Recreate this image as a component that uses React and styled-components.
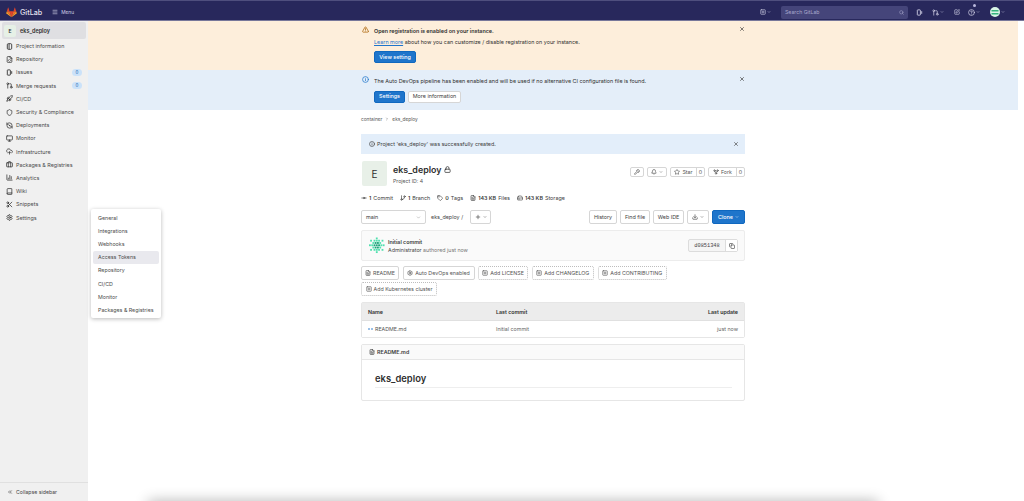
import React from 'react';
import styled, { createGlobalStyle } from 'styled-components';
import {
  AlertTriangle, Info, X, ChevronDown, ChevronRight, Search, Lock, Wrench, Bell, Star, GitFork, Download,
  Copy, FileText, Settings, PlusSquare, GitCommitHorizontal, GitBranch, GitPullRequest, Tag, HardDrive, Plus, Menu,
  SquarePen, HelpCircle, Rocket, Shield, Monitor, CloudUpload, Briefcase, ChartColumn, Book, Scissors,
  ChevronsLeft, FileCode, RefreshCcwDot,
} from 'lucide-react';

const GlobalStyle = createGlobalStyle`
  html, body {
    margin: 0;
    height: 100%;
    overflow: hidden;
    background: #fff;
  }
  body {
    font-family: Inter, "Liberation Sans", sans-serif;
    font-size: 6px;
    color: #303030;
  }
  * { box-sizing: border-box; }
  svg.lucide { stroke-width: 2.5; }
`;

const Page = styled.div`
  position: relative;
  width: 1024px;
  height: 501px;
  overflow: hidden;
`;

const Navbar = styled.header`
  position: relative;
  height: 21px;
  background: #28285c;
  display: flex;
  align-items: center;
  padding: 4px 0 0 6px;
  color: #d1d0e6;
  border-bottom: 1px solid #77779a;

  /* edges of the browser tabs above the page */
  &::before {
    content: '';
    position: absolute;
    left: 0;
    right: 0;
    top: 0;
    height: 1px;
    background: repeating-linear-gradient(90deg, #4f4f7e 0 88px, #28285c 88px 92px, #4f4f7e 92px 84.3px);
    background-size: 84.3px 1px;
    background-position: 4px 0;
  }
`;

const Brand = styled.span`
  font-size: 7.2px;
  font-weight: 500;
  margin-left: 3px;
  color: #e4e3f0;
`;

const MenuLabel = styled.span`
  display: flex;
  align-items: center;
  gap: 3px;
  margin-left: 10px;
  font-size: 4.8px;
`;

const NavRight = styled.div`
  margin-left: auto;
  display: flex;
  align-items: center;
  height: 100%;
  padding-right: 19px;
`;

const NavIcon = styled.span`
  position: relative;
  display: flex;
  align-items: center;
  gap: 1px;
  margin-left: ${(p) => p.$gap || 8}px;
  color: #d1d0e6;
`;

const NavDot = styled.span`
  position: absolute;
  left: 5px;
  top: -5px;
  width: 3px;
  height: 3px;
  border-radius: 50%;
  background: #b9b8dc;
`;

const SearchBox = styled.div`
  width: 127px;
  height: 13px;
  margin-left: 10px;
  background: #45457a;
  border-radius: 2px;
  display: flex;
  align-items: center;
  justify-content: space-between;
  padding: 0 4px;
  font-size: 5.2px;
  color: #a9a8cc;
`;

const Layout = styled.div`
  display: flex;
  height: 480px;
`;

const Sidebar = styled.aside`
  width: 88px;
  flex: none;
  background: #f0f0f0;
  display: flex;
  flex-direction: column;
  padding: 1px 2px 0;
`;

const ProjectItem = styled.div`
  height: 17px;
  display: flex;
  align-items: center;
  gap: 4px;
  padding-left: 2px;
  background: #dfdfe2;
  border-radius: 2px;
  font-size: 5.5px;
  font-weight: 600;
  margin-bottom: 0.5px;
`;

const ProjectAvatar = styled.span`
  width: 12px;
  height: 12px;
  border-radius: 2px;
  background: #e6f0e6;
  display: flex;
  align-items: center;
  justify-content: center;
  font-size: 5px;
`;

const NavItem = styled.div`
  height: 13.2px;
  display: flex;
  align-items: center;
  gap: 3px;
  padding-left: 4px;
  font-size: 5.4px;
  color: #4c4c4c;
  svg { flex: none; color: #303030; }
`;

const Count = styled.span`
  margin-left: auto;
  margin-right: 4px;
  width: 10px;
  height: 7px;
  border-radius: 3.5px;
  background: #cbe2f9;
  color: #0b5cad;
  font-size: 4.5px;
  text-align: center;
  line-height: 7px;
`;

const SidebarFooter = styled.div`
  margin: auto -2px 0;
  height: 19px;
  border-top: 1px solid #e0e0e0;
  display: flex;
  align-items: center;
  gap: 3px;
  padding-left: 7px;
  font-size: 5.2px;
  color: #444;
`;

const Flyout = styled.div`
  position: absolute;
  left: 91px;
  top: 209px;
  width: 70px;
  height: 109px;
  background: #fff;
  border-radius: 2px;
  box-shadow: 0 1px 4px rgba(0, 0, 0, 0.28);
  padding: 2px;
`;

const FlyoutItem = styled.div`
  height: 13.2px;
  display: flex;
  align-items: center;
  padding-left: 5px;
  border-radius: 2px;
  font-size: 5.3px;
  color: #4c4c4c;
  background: ${(p) => (p.$active ? '#e9e9ee' : 'transparent')};
`;

const Main = styled.main`
  flex: 1;
  padding-right: 6px;
  min-width: 0;
`;

const Banner = styled.section`
  height: ${(p) => p.$h}px;
  background: ${(p) => p.$bg};
  padding-top: ${(p) => p.$pad}px;
`;

const Container = styled.div`
  width: 384px;
  margin: 0 auto;
`;

const BannerRow = styled.div`
  display: flex;
  align-items: flex-start;
  gap: 5px;
  padding-left: 1px;
`;

const BannerBody = styled.div`
  flex: 1;
  font-size: 5.4px;
  line-height: 10.5px;
`;

const BannerTitle = styled.div`
  font-weight: 600;
`;

const TextLink = styled.a`
  color: #1f75cb;
  text-decoration: underline;
`;

const Actions = styled.div`
  display: flex;
  gap: 3px;
  margin-top: 4px;
`;

const Button = styled.span`
  height: ${(p) => p.$h || 12}px;
  width: ${(p) => (p.$w ? `${p.$w}px` : 'auto')};
  display: inline-flex;
  align-items: center;
  justify-content: center;
  gap: 2px;
  flex: none;
  border-radius: 2px;
  font-size: 5.4px;
  white-space: nowrap;
  background: ${(p) => (p.$primary ? '#1f75cb' : '#fff')};
  color: ${(p) => (p.$primary ? '#fff' : '#404040')};
  border: 1px solid ${(p) => (p.$primary ? '#1068bf' : '#d6d6d6')};
  font-weight: ${(p) => (p.$primary ? 500 : 400)};
`;

const Close = styled(X)`
  flex: none;
  margin-right: 0;
  color: #303030;
`;

const Content = styled(Container)`
  padding-top: 6px;
`;

const Crumbs = styled.div`
  height: 6px;
  display: flex;
  align-items: center;
  gap: 3px;
  font-size: 4.8px;
  color: #555;
`;

const SuccessAlert = styled.div`
  height: 20px;
  margin-top: 12px;
  background: #e3eefa;
  display: flex;
  align-items: center;
  gap: 2px;
  padding: 0 6px 0 8px;
  font-size: 5.4px;
  color: #404040;
  span { flex: 1; }
`;

const ProjectHead = styled.div`
  display: flex;
  align-items: flex-start;
  margin-top: 7px;
  height: 25px;
`;

const BigAvatar = styled.div`
  width: 25px;
  height: 25px;
  margin-left: 1px;
  border-radius: 2px;
  background: #e8f0e8;
  display: flex;
  align-items: center;
  justify-content: center;
  font-size: 10px;
  color: #303030;
  flex: none;
`;

const ProjectText = styled.div`
  margin-left: 6px;
  flex: 1;
`;

const ProjectTitle = styled.h1`
  margin: 2px 0 0;
  font-size: 8.9px;
  line-height: 13px;
  font-weight: 600;
  display: flex;
  align-items: center;
  gap: 3px;
`;

const ProjectId = styled.div`
  font-size: 5.2px;
  margin-top: 2px;
  color: #555;
`;

const HeadActions = styled.div`
  display: flex;
  gap: 3px;
  margin-top: 6px;
`;

const SplitButton = styled.span`
  height: 10px;
  display: inline-flex;
  border: 1px solid #d6d6d6;
  border-radius: 2px;
  font-size: 5.3px;
  color: #555;
  align-items: stretch;
`;

const SplitPart = styled.span`
  display: flex;
  align-items: center;
  justify-content: center;
  gap: 2px;
  width: ${(p) => p.$w}px;
  & + & { border-left: 1px solid #d6d6d6; }
`;

const Stats = styled.div`
  display: flex;
  gap: 7px;
  margin-top: 8px;
  height: 7px;
  align-items: center;
  font-size: 5.4px;
  color: #404040;
`;

const Stat = styled.span`
  display: flex;
  align-items: center;
  gap: 2px;
  b { font-weight: 600; }
`;

const Toolbar = styled.div`
  display: flex;
  align-items: center;
  margin-top: 9px;
  height: 14px;
`;

const BranchSelect = styled.span`
  width: 65px;
  height: 14px;
  border: 1px solid #d6d6d6;
  border-radius: 2px;
  display: flex;
  align-items: center;
  justify-content: space-between;
  padding: 0 4px;
  font-size: 5.4px;
  color: #9a9a9a;
  em { font-style: normal; color: #404040; }
`;

const PathText = styled.span`
  margin: 0 5px;
  font-size: 5.4px;
  color: #444;
  width: 34px;
  white-space: nowrap;
`;

const ToolRight = styled.div`
  margin-left: auto;
  display: flex;
  gap: 3px;
`;

const CommitBox = styled.div`
  height: 31px;
  margin-top: 6px;
  background: #fafafa;
  border: 1px solid #ececec;
  border-radius: 2px;
  display: flex;
  align-items: center;
  padding: 0 6px 0 7px;
`;

const CommitText = styled.div`
  margin-left: 3px;
  flex: 1;
  font-size: 5.3px;
  line-height: 8px;
  b { font-weight: 600; color: #404040; display: block; }
  small { font-size: 5.3px; color: #777; }
  i { font-style: normal; color: #444; }
`;

const ShaBox = styled.div`
  display: flex;
  height: 13px;
  border: 1px solid #dcdcdc;
  border-radius: 2px;
  background: #f5f5f5;
  font-family: "Liberation Mono", monospace;
  font-size: 5.3px;
  color: #444;
`;

const ShaPart = styled.span`
  width: ${(p) => p.$w}px;
  display: flex;
  align-items: center;
  justify-content: center;
  background: ${(p) => p.$bg || 'transparent'};
  & + & { border-left: 1px solid #dcdcdc; }
`;

const Shortcuts = styled.div`
  display: flex;
  flex-wrap: wrap;
  gap: 2px 3.5px;
  margin-top: 5px;
  max-width: 320px;
`;

const Shortcut = styled.span`
  height: 14px;
  width: ${(p) => p.$w}px;
  display: inline-flex;
  align-items: center;
  justify-content: center;
  gap: 2px;
  border-radius: 2px;
  font-size: 5.3px;
  color: #555;
  border: 1px ${(p) => (p.$dashed ? 'dotted #bdbdbd' : 'solid #d6d6d6')};
  white-space: nowrap;
`;

const FileTable = styled.div`
  margin-top: 6px;
  border: 1px solid #e6e6e6;
  border-radius: 2px;
  font-size: 5.3px;
`;

const TableRow = styled.div`
  height: ${(p) => p.$h}px;
  display: grid;
  grid-template-columns: 128px 1fr auto;
  align-items: center;
  padding: 0 6px;
  background: ${(p) => (p.$head ? '#ececec' : '#fff')};
  font-weight: ${(p) => (p.$head ? 600 : 400)};
  color: ${(p) => (p.$head ? '#303030' : '#666')};
  border-bottom: ${(p) => (p.$head ? '1px solid #e0e0e0' : 'none')};
`;

const FileName = styled.span`
  display: flex;
  align-items: center;
  gap: 2px;
  color: #555;
`;

const ReadmeBox = styled.div`
  margin-top: 6px;
  height: 57px;
  border: 1px solid #e6e6e6;
  border-radius: 2px;
`;

const ReadmeHead = styled.div`
  height: 15px;
  background: #fafafa;
  border-bottom: 1px solid #e6e6e6;
  display: flex;
  align-items: center;
  gap: 2px;
  padding-left: 7px;
  font-size: 5.3px;
  font-weight: 600;
  color: #404040;
`;

const ReadmeTitle = styled.h2`
  margin: 12px 12px 0 13px;
  font-size: 9.4px;
  line-height: 14px;
  font-weight: 600;
  padding-bottom: 1px;
  border-bottom: 1px solid #eee;
`;

const WindowShadow = styled.div`
  position: absolute;
  left: 148px;
  right: 146px;
  bottom: -12px;
  height: 12px;
  box-shadow: 0 0 14px rgba(0, 0, 0, 0.3);
`;

const TanukiLogo = () => (
  <svg width="11" height="11" viewBox="0 0 25 24">
    <path d="M12.5 23 8 9h9z" fill="#e24329" />
    <path d="M12.5 23 8 9H2z" fill="#fc6d26" />
    <path d="M2 9 .6 13.4c-.1.4 0 .8.4 1.1L12.5 23z" fill="#fca326" />
    <path d="M2 9h6L5.4 1.2c-.1-.4-.7-.4-.9 0z" fill="#e24329" />
    <path d="M12.5 23 17 9h6z" fill="#fc6d26" />
    <path d="M23 9l1.4 4.4c.1.4 0 .8-.4 1.1L12.5 23z" fill="#fca326" />
    <path d="M23 9h-6l2.6-7.8c.1-.4.7-.4.9 0z" fill="#e24329" />
  </svg>
);

// GitLab's issues glyph: an open-sided card with a short bar
const IssuesIcon = ({ size = 7 }) => (
  <svg width={size} height={size} viewBox="0 0 16 16" fill="none" stroke="currentColor" strokeWidth="2">
    <path d="M9 2H4a1 1 0 0 0-1 1v10a1 1 0 0 0 1 1h5a1 1 0 0 0 1-1V3a1 1 0 0 0-1-1z" />
    <path d="M13 5v6" />
  </svg>
);

// GitLab's project glyph: rounded card with a spine
const ProjectIcon = ({ size = 7 }) => (
  <svg width={size} height={size} viewBox="0 0 16 16" fill="none" stroke="currentColor" strokeWidth="2">
    <rect x="3" y="1.5" width="10" height="13" rx="2.5" />
    <path d="M7 2v12" />
  </svg>
);

const MarkdownIcon = () => (
  <svg width="5" height="6" viewBox="0 0 10 10" fill="none" stroke="#1f75cb" strokeWidth="1.8">
    <path d="M0 5h4M6 5h4" />
  </svg>
);

const Identicon = () => {
  const cells = [
    [6, 0], [1, 2], [4, 2], [6, 2], [8, 2], [11, 2], [3, 4], [5, 4], [7, 4], [9, 4],
    [0, 6], [2, 6], [4, 6], [6, 6], [8, 6], [10, 6], [12, 6], [3, 8], [5, 8], [7, 8], [9, 8],
    [1, 10], [4, 10], [6, 10], [8, 10], [11, 10], [6, 12],
  ];
  return (
    <svg width="16" height="17" viewBox="0 0 14 14">
      {cells.map(([x, y]) => (
        <rect key={`${x}-${y}`} x={x} y={y} width="1.6" height="1.6" fill={x > 3 && x < 9 && y > 3 && y < 9 ? '#1aa37a' : '#4fe0ae'} />
      ))}
    </svg>
  );
};

const UserAvatar = () => (
  <svg width="10" height="10" viewBox="0 0 10 10">
    <circle cx="5" cy="5" r="5" fill="#d8f5e6" />
    <rect x="1.5" y="3" width="7" height="1.5" fill="#35b27d" />
    <rect x="1.5" y="6" width="7" height="1.5" fill="#35b27d" />
  </svg>
);

const navItems = [
  { label: 'Project information', Icon: ProjectIcon },
  { label: 'Repository', Icon: FileCode },
  { label: 'Issues', Icon: IssuesIcon, count: 0 },
  { label: 'Merge requests', Icon: GitPullRequest, count: 0 },
  { label: 'CI/CD', Icon: Rocket },
  { label: 'Security & Compliance', Icon: Shield },
  { label: 'Deployments', Icon: RefreshCcwDot },
  { label: 'Monitor', Icon: Monitor },
  { label: 'Infrastructure', Icon: CloudUpload },
  { label: 'Packages & Registries', Icon: Briefcase },
  { label: 'Analytics', Icon: ChartColumn },
  { label: 'Wiki', Icon: Book },
  { label: 'Snippets', Icon: Scissors },
  { label: 'Settings', Icon: Settings },
];

const flyoutItems = ['General', 'Integrations', 'Webhooks', 'Access Tokens', 'Repository', 'CI/CD', 'Monitor', 'Packages & Registries'];

const App = () => (
  <Page>
    <GlobalStyle />
    <Navbar>
      <TanukiLogo />
      <Brand>GitLab</Brand>
      <MenuLabel><Menu size={6} />Menu</MenuLabel>
      <NavRight>
        <NavIcon><PlusSquare size={6} /><ChevronDown size={4} /></NavIcon>
        <SearchBox>Search GitLab<Search size={5} /></SearchBox>
        <NavIcon $gap={8}><IssuesIcon /></NavIcon>
        <NavIcon $gap={9}><GitPullRequest size={7} /><ChevronDown size={4} /></NavIcon>
        <NavIcon $gap={10}><SquarePen size={6} /></NavIcon>
        <NavIcon $gap={8}><HelpCircle size={7} /><ChevronDown size={4} /><NavDot /></NavIcon>
        <NavIcon $gap={10}><UserAvatar /><ChevronDown size={4} /></NavIcon>
      </NavRight>
    </Navbar>
    <Layout>
      <Sidebar>
        <ProjectItem><ProjectAvatar>E</ProjectAvatar>eks_deploy</ProjectItem>
        {navItems.map(({ label, Icon, count }) => (
          <NavItem key={label}>
            <Icon size={7} />
            {label}
            {count !== undefined && <Count>{count}</Count>}
          </NavItem>
        ))}
        <SidebarFooter><ChevronsLeft size={6} />Collapse sidebar</SidebarFooter>
      </Sidebar>
      <Main>
        <Banner $h={49} $bg="#fdeedb" $pad={5}>
          <Container>
            <BannerRow>
              <AlertTriangle size={7} color="#ab6100" />
              <BannerBody>
                <BannerTitle>Open registration is enabled on your instance.</BannerTitle>
                <TextLink>Learn more</TextLink> about how you can customize / disable registration on your instance.
                <Actions><Button $primary $w={42}>View setting</Button></Actions>
              </BannerBody>
              <Close size={6} />
            </BannerRow>
          </Container>
        </Banner>
        <Banner $h={40} $bg="#e4eef9" $pad={6}>
          <Container>
            <BannerRow>
              <Info size={7} color="#1f75cb" />
              <BannerBody>
                The Auto DevOps pipeline has been enabled and will be used if no alternative CI configuration file is found.
                <Actions>
                  <Button $primary $w={31}>Settings</Button>
                  <Button $w={53}>More information</Button>
                </Actions>
              </BannerBody>
              <Close size={6} />
            </BannerRow>
          </Container>
        </Banner>
        <Content>
          <Crumbs>container <ChevronRight size={4} /> eks_deploy</Crumbs>
          <SuccessAlert>
            <Info size={6} />
            <span>Project 'eks_deploy' was successfully created.</span>
            <X size={6} />
          </SuccessAlert>
          <ProjectHead>
            <BigAvatar>E</BigAvatar>
            <ProjectText>
              <ProjectTitle>eks_deploy <Lock size={7} /></ProjectTitle>
              <ProjectId>Project ID: 4</ProjectId>
            </ProjectText>
            <HeadActions>
              <SplitButton><SplitPart $w={12}><Wrench size={6} /></SplitPart></SplitButton>
              <SplitButton><SplitPart $w={18}><Bell size={6} /><ChevronDown size={4} /></SplitPart></SplitButton>
              <SplitButton>
                <SplitPart $w={25}><Star size={6} />Star</SplitPart>
                <SplitPart $w={8}>0</SplitPart>
              </SplitButton>
              <SplitButton>
                <SplitPart $w={27}><GitFork size={6} />Fork</SplitPart>
                <SplitPart $w={8}>0</SplitPart>
              </SplitButton>
            </HeadActions>
          </ProjectHead>
          <Stats>
            <Stat><GitCommitHorizontal size={6} /><b>1</b> Commit</Stat>
            <Stat><GitBranch size={6} /><b>1</b> Branch</Stat>
            <Stat><Tag size={6} /><b>0</b> Tags</Stat>
            <Stat><FileText size={6} /><b>143 KB</b> Files</Stat>
            <Stat><HardDrive size={6} /><b>143 KB</b> Storage</Stat>
          </Stats>
          <Toolbar>
            <BranchSelect><em>main</em><ChevronDown size={5} /></BranchSelect>
            <PathText>eks_deploy /</PathText>
            <Button $h={14} $w={21}><Plus size={6} /><ChevronDown size={4} /></Button>
            <ToolRight>
              <Button $h={14} $w={28}>History</Button>
              <Button $h={14} $w={30}>Find file</Button>
              <Button $h={14} $w={31}>Web IDE</Button>
              <Button $h={14} $w={22}><Download size={6} /><ChevronDown size={4} /></Button>
              <Button $h={14} $w={33} $primary>Clone <ChevronDown size={4} /></Button>
            </ToolRight>
          </Toolbar>
          <CommitBox>
            <Identicon />
            <CommitText>
              <b>Initial commit</b>
              <i>Administrator</i> <small>authored just now</small>
            </CommitText>
            <ShaBox>
              <ShaPart $w={36}>d0851348</ShaPart>
              <ShaPart $w={12} $bg="#fff"><Copy size={6} /></ShaPart>
            </ShaBox>
          </CommitBox>
          <Shortcuts>
            <Shortcut $w={38}><FileText size={6} />README</Shortcut>
            <Shortcut $w={72}><Settings size={6} />Auto DevOps enabled</Shortcut>
            <Shortcut $w={50} $dashed><PlusSquare size={6} />Add LICENSE</Shortcut>
            <Shortcut $w={62.5} $dashed><PlusSquare size={6} />Add CHANGELOG</Shortcut>
            <Shortcut $w={69.5} $dashed><PlusSquare size={6} />Add CONTRIBUTING</Shortcut>
            <Shortcut $w={76} $dashed><PlusSquare size={6} />Add Kubernetes cluster</Shortcut>
          </Shortcuts>
          <FileTable>
            <TableRow $head $h={18}><span>Name</span><span>Last commit</span><span>Last update</span></TableRow>
            <TableRow $h={16}>
              <FileName><MarkdownIcon />README.md</FileName>
              <span>Initial commit</span>
              <span>just now</span>
            </TableRow>
          </FileTable>
          <ReadmeBox>
            <ReadmeHead><FileText size={6} />README.md</ReadmeHead>
            <ReadmeTitle>eks_deploy</ReadmeTitle>
          </ReadmeBox>
        </Content>
      </Main>
    </Layout>
    <Flyout>
      {flyoutItems.map((item) => (
        <FlyoutItem key={item} $active={item === 'Access Tokens'}>{item}</FlyoutItem>
      ))}
    </Flyout>
    <WindowShadow />
  </Page>
);

export default App;
